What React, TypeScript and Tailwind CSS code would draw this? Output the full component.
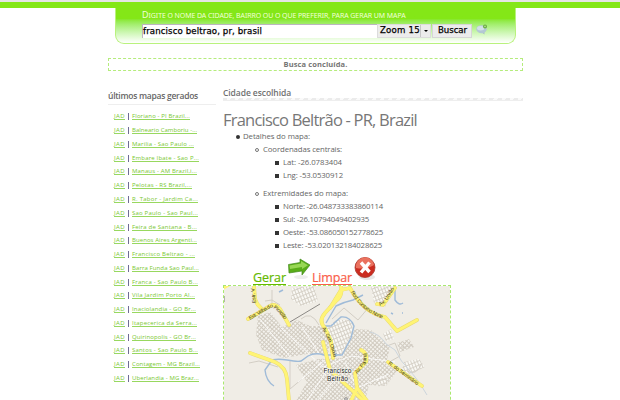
import React from "react";

const recent: [string, string][] = [
  ["Floriano - PI Brazil...", "w-[58px]"],
  ["Balneario Camboriu -...", "w-[65px]"],
  ["Marilia - Sao Paulo ...", "w-[62px]"],
  ["Embare Ibate - Sao P...", "w-[67px]"],
  ["Manaus - AM Brazil,i...", "w-[65px]"],
  ["Pelotas - RS Brazil,...", "w-[60px]"],
  ["R. Tabor - Jardim Ca...", "w-[66px]"],
  ["Sao Paulo - Sao Paul...", "w-[66px]"],
  ["Feira de Santana - B...", "w-[65px]"],
  ["Buenos Aires Argenti...", "w-[65px]"],
  ["Francisco Beltrao - ...", "w-[63px]"],
  ["Barra Funda Sao Paul...", "w-[67px]"],
  ["Franca - Sao Paulo B...", "w-[66px]"],
  ["Vila Jardim Porto Al...", "w-[63px]"],
  ["Inaciolandia - GO Br...", "w-[64px]"],
  ["Itapecerica da Serra...", "w-[65px]"],
  ["Quirinopolis - GO Br...", "w-[64px]"],
  ["Santos - Sao Paulo B...", "w-[66px]"],
  ["Contagem - MG Brazil...", "w-[68px]"],
  ["Uberlandia - MG Braz...", "w-[67px]"],
];

/* Single line of text stretched evenly over the width of its box. */
function Fit({ children, className }: { children: string; className: string }) {
  const box = React.useRef<HTMLSpanElement>(null);
  const inner = React.useRef<HTMLSpanElement>(null);
  React.useLayoutEffect(() => {
    const fit = () => {
      if (!box.current || !inner.current) return;
      inner.current.style.letterSpacing = "0px";
      const w = inner.current.getBoundingClientRect().width;
      const gap = (box.current.getBoundingClientRect().width - w) / children.length;
      inner.current.style.letterSpacing = `${gap}px`;
    };
    fit();
    document.fonts?.ready.then(fit);
  }, [children]);
  return (
    <span ref={box} className={`block shrink-0 whitespace-nowrap ${className}`}>
      <span ref={inner}>{children}</span>
    </span>
  );
}

function Search() {
  return (
    <div className="mx-auto -ml-px h-9 w-[401px] rounded-b-[9px] border-x border-b border-[#b9f27d] bg-linear-to-b from-[#84e717] from-30% to-white to-100% pl-[26px]">
      <div className="flex h-4 items-start">
        <span className="font-['Noto_Sans'] text-[9px] leading-[14px] text-[#f0ffd9]">D</span>
        <Fit className="w-[257px] font-['Noto_Sans'] text-[7px] leading-[15px] text-[#f0ffd9]">
          IGITE O NOME DA CIDADE, BAIRRO OU O QUE PREFERIR, PARA GERAR UM MAPA
        </Fit>
      </div>
      <div className="flex h-[14px] font-['DejaVu_Sans'] text-[8.6px] leading-[12px] text-black">
        <div className="w-[235px] border-t border-l border-[#bcb6c0] bg-white">
          <Fit className="w-[119px] [-webkit-text-stroke:0.25px_black]">francisco beltrao, pr, brasil</Fit>
        </div>
        <div className="flex w-[54px] border border-[#dcdcdc] bg-[#ececec] pl-[2px] leading-[11px]">
          <Fit className="w-[40px] [-webkit-text-stroke:0.25px_black]">Zoom 15</Fit>
          <div className="flex w-[11px] items-center justify-center border-l border-[#c7c7c7]">
            <span className="border-x-2 border-t-2 border-x-transparent border-t-black" />
          </div>
        </div>
        <div className="ml-px w-[40px] border border-[#d6d6d6] bg-[#ececec] pl-[5px] leading-[11px]">
          <Fit className="w-[29px] [-webkit-text-stroke:0.25px_black]">Buscar</Fit>
        </div>
        <svg className="ml-1 h-[11px] w-3" viewBox="0 0 12 11">
          <path d="M5 8l3.5 2.5V7z" fill="#a9bdc7" />
          <ellipse cx="5.5" cy="5.2" rx="5.2" ry="4" fill="#b3c8d4" />
          <ellipse cx="4.7" cy="4.2" rx="3.6" ry="2.2" fill="#d3e1e8" />
          <circle cx="9" cy="2.4" r="2" fill="#68ad3c" />
          <path d="M9 1.5v1.8M8.1 2.4h1.8" stroke="#c8e8b0" strokeWidth=".6" />
        </svg>
      </div>
    </div>
  );
}

function Detail({ label, width }: { label: string; width: string }) {
  return (
    <li className="flex h-[13px] items-center">
      <span className="mr-1 size-[4px] bg-[#333]" />
      <Fit className={width}>{label}</Fit>
    </li>
  );
}

function CityMap() {
  const roads = [
    "M254 286L255 299Q257 305 261 308",
    "M248 319L270 306Q275 303 280 309L289 325",
    "M341 286Q343 296 336 301L325 313Q318 321 325 328L331 341L333 358",
    "M323 342L330 370L345 384L364 401",
    "M250 353L275 362Q286 367 287 379L289 401",
    "M330 308L341 290L350 288Q357 301 367 309Q375 315 385 317L397 331L417 320",
    "M377 304L383 305L395 288",
    "M361 350Q368 353 366 362L355 373L357 388L351 401",
    "M357 388L367 401",
    "M388 362L422 386",
  ];
  const districts = [
    "M258 316L270 312L282 327L297 320L310 326L322 326L330 343L328 354L307 354L284 358L262 350L256 335Z",
    "M292 288L314 286L318 301L301 306L291 299Z",
    "M336 320L351 320L353 332L346 343L342 356L332 354L325 330Z",
    "M355 329L371 330L390 347L386 364L397 371L386 386L369 385L365 401H296L307 382L296 365L318 359L342 358L347 341Z",
    "M371 287L394 286L385 307L374 303Z",
    "M383 334L391 329L394 339L386 341Z",
    "M397 343L409 339L414 347L400 352Z",
    "M404 362L419 359L425 367L410 374L402 370Z",
    "M376 379L386 376L390 381L379 387Z",
  ];
  return (
    <svg className="h-[114px] w-[226px]" viewBox="224 286 226 114">
      <defs>
        <pattern id="blocks" width="3" height="4" patternUnits="userSpaceOnUse" patternTransform="rotate(-22)">
          <rect width="3" height="4" fill="#d6d1c7" />
          <rect x="0" y="0" width="2" height="3" fill="#faf9f5" />
        </pattern>
        <pattern id="blocksTurned" width="3" height="3" patternUnits="userSpaceOnUse" patternTransform="rotate(42)">
          <rect width="3" height="3" fill="#d1cbc0" />
          <rect width="1.9" height="1.9" fill="#f8f7f2" />
        </pattern>
        <path id="r1" d="M250 320L270 308Q275 305 289 326" />
        <path id="r2" d="M322 328L330 344L334 359" />
        <path id="r3" d="M351 292Q360 311 386 320" />
        <path id="r4" d="M380 306L386 302L396 286" />
        <path id="r5" d="M357 374L366 363L367 352" />
        <path id="r6" d="M388 364L421 388" />
        <path id="r7" d="M256 303L254 286" />
      </defs>
      <rect x="223" y="286" width="228" height="115" fill="#f0ede6" />
      {districts.map((d, i) => (
        <path key={d} d={d} fill={i % 3 === 0 ? "url(#blocksTurned)" : "url(#blocks)"} />
      ))}
      <g fill="none" stroke="#d3cec5" strokeWidth="1">
        <path d="M272 290V305M265 301L272 300L280 305M249 363L259 361L278 367M290 360V389L302 379M301 319Q311 310 319 325M332 319L344 308L358 320L369 307" />
        <path d="M384 347L395 343L400 356L391 361M402 348L413 345M407 371Q416 376 421 365M376 384Q381 376 389 381" />
      </g>
      <g fill="none" stroke="#fff" strokeWidth=".8">
        <path d="M281 328L323 367L351 356L395 362M260 319L290 357M302 327L320 355M345 362L357 388L389 374M298 382L325 360M307 401L327 370M317 401L336 378" />
      </g>
      <g fill="none" stroke="#9fbbd8" strokeWidth="1.4">
        <path d="M268 361Q276 358 287 360T301 361L308 356Q315 352 324 355L342 355L351 338L354 326Q350 316 341 317L331 326L323 326" />
        <path d="M272 360L265 370Q266 381 274 386" />
        <path d="M326 323L336 306Q344 302 353 300L363 295" />
        <path d="M395 288V300Q399 306 403 303M279 292L283 290M391 313l2 1M402 313h1" />
      </g>
      <path d="M370 332Q380 334 386 344L395 350Q401 362 409 370T427 395" fill="none" stroke="#ccd5dc" />
      <path d="M290 322L320 304" stroke="#8c8985" strokeWidth="1" />
      <g fill="none" strokeLinejoin="round" strokeLinecap="round">
        {roads.map((d) => <path key={d} d={d} stroke="#e6d873" strokeWidth="3.8" />)}
        {roads.map((d) => <path key={d} d={d} stroke="#fff475" strokeWidth="3" />)}
      </g>
      <path d="M223 286h7l-7 4z" fill="#fff475" />
      <path d="M224 296v6" stroke="#777" />
      <g className="font-['Liberation_Sans']" fontSize="5.2" fill="#3f3c22">
        <text><textPath href="#r1" textLength="43">Estr. Velha do Picadão</textPath></text>
        <text><textPath href="#r2" textLength="32">Av. Gen. Osório</textPath></text>
        <text><textPath href="#r3" textLength="42">Rod. Contorno Norte</textPath></text>
        <text><textPath href="#r4" textLength="23">Av. União</textPath></text>
        <text><textPath href="#r5" textLength="24">Av. Paraná</textPath></text>
        <text><textPath href="#r6" textLength="36">R. do Seminário</textPath></text>
        <text><textPath href="#r7" textLength="15">Estr. V</textPath></text>
      </g>
      <g className="font-['Liberation_Sans']" fontSize="6.6" textAnchor="middle" fill="#222" stroke="#f8f7f2" strokeWidth="1.2" paintOrder="stroke">
        <text x="337.5" y="373" textLength="28">Francisco</text>
        <text x="337.5" y="380.5" textLength="21">Beltrão</text>
      </g>
      <circle cx="346" cy="399" r="1.3" fill="#fff" stroke="#555" strokeWidth=".7" />
    </svg>
  );
}

export default function App() {
  return (
    <div className="h-[400px] w-[620px] overflow-hidden bg-white font-['Open_Sans',sans-serif] text-[#666]">
      <header className="h-2 border-t-2 border-[#e5e5e5] bg-[#84e717]" />
      <main className="ml-[108px] w-[415px]">
        <div className="pl-2"><Search /></div>
        <div className="mt-[14px] flex h-[13px] items-center justify-center border border-dashed border-[#b5ec7c] text-[7.5px] font-bold text-[#757575]">
          <Fit className="w-[64px]">Busca concluída.</Fit>
        </div>
        <div className="flex">
          <aside className="w-[115px] pt-[18px]">
            <div className="h-[16px] w-[108px] border-b border-[#eee] text-[8.5px] leading-[14px] font-semibold">
              <Fit className="w-[90px]">últimos mapas gerados</Fit>
            </div>
            <ul className="pt-[5px] pl-[6px] text-[6px] text-[#79c72f]">
              {recent.map(([name, width]) => (
                <li key={name} className="flex h-[13.77px] items-center leading-[8px]">
                  <Fit className="w-[11px] border-b border-[#98d85f] leading-[6px]">JAD</Fit>
                  <span className="mx-[3px] h-[7px] w-px bg-[#6f6c95]" />
                  <Fit className={`border-b border-[#98d85f] leading-[6px] ${width}`}>{name}</Fit>
                </li>
              ))}
            </ul>
          </aside>
          <section className="w-[300px] pt-[14px]">
            <div className="h-[13px] text-[8.5px] leading-[15px] font-semibold text-[#707070]">
              <Fit className="w-[68px]">Cidade escolhida</Fit>
            </div>
            <div className="h-[2px] bg-[repeating-linear-gradient(120deg,#ebebeb_0_4px,#fafafa_4px_7px)]" />
            <div className="h-px bg-[#eee]" />
            <h1 className="mt-[8px] h-[21px] text-[16.5px] leading-[22px] text-[#777]">
              <Fit className="w-[194px]">Francisco Beltrão - PR, Brazil</Fit>
            </h1>
            <div className="text-[7.8px] leading-[13px]">
              <div className="flex h-[13px] items-center pl-[13px]">
                <span className="mr-[3px] size-[4px] rounded-full bg-[#333]" />
                <Fit className="w-[67px]">Detalhes do mapa:</Fit>
              </div>
              <div className="flex h-[13px] items-center pl-[32px]">
                <span className="mr-1 size-[4px] rounded-full border border-[#777]" />
                <Fit className="w-[79px]">Coordenadas centrais:</Fit>
              </div>
              <ul className="pl-[52px]">
                <Detail label="Lat: -26.0783404" width="w-[59px]" />
                <Detail label="Lng: -53.0530912" width="w-[60px]" />
              </ul>
              <div className="mt-[5px] flex h-[13px] items-center pl-[32px]">
                <span className="mr-1 size-[4px] rounded-full border border-[#777]" />
                <Fit className="w-[85px]">Extremidades do mapa:</Fit>
              </div>
              <ul className="pl-[52px]">
                <Detail label="Norte: -26.048733383860114" width="w-[100px]" />
                <Detail label="Sul: -26.10794049402935" width="w-[86px]" />
                <Detail label="Oeste: -53.086050152778625" width="w-[100px]" />
                <Detail label="Leste: -53.020132184028625" width="w-[99px]" />
              </ul>
            </div>
            <div className="flex h-[33px] items-end pl-[30px] text-[12.5px]">
              <Fit className="w-[33px] border-b border-[#65b900] leading-[13px] text-[#65b900] [-webkit-text-stroke:0.2px_#65b900]">Gerar</Fit>
              <svg className="mr-[2px] ml-[2px] h-[28px] w-[22px]" viewBox="0 0 22 28">
                <ellipse cx="13" cy="20" rx="7" ry="2" fill="#eee" />
                <path d="M.5 7.5L12 5.5V2L22 8L14 18V14L1 16Z" fill="#59ad18" stroke="#458b20" strokeWidth=".7" />
                <path d="M1.5 8.5L13 6.5V4L20 8.2L14 12V10L2 12Z" fill="#98d754" />
              </svg>
              <Fit className="w-[40px] border-b border-[#fa604a] leading-[13px] text-[#fa604a] [-webkit-text-stroke:0.2px_#fa604a]">Limpar</Fit>
              <svg className="ml-[2px] h-[28px] w-[22px]" viewBox="0 0 22 28">
                <ellipse cx="13" cy="20" rx="8" ry="3" fill="#e8e8e8" />
                <circle cx="11" cy="10.5" r="10" fill="#cb2c20" stroke="#a8382d" strokeWidth=".8" />
                <path d="M2 11A9 9 0 0 1 20 8Q12 13 2 11Z" fill="#ea725f" />
                <path d="M7 5.5L15.5 15M15.5 5.5L7 15.5" stroke="#fff" strokeWidth="3.4" />
              </svg>
            </div>
            <div className="h-[130px] w-[228px] border border-dashed border-[#a9e86e]">
              <CityMap />
            </div>
          </section>
        </div>
      </main>
    </div>
  );
}
